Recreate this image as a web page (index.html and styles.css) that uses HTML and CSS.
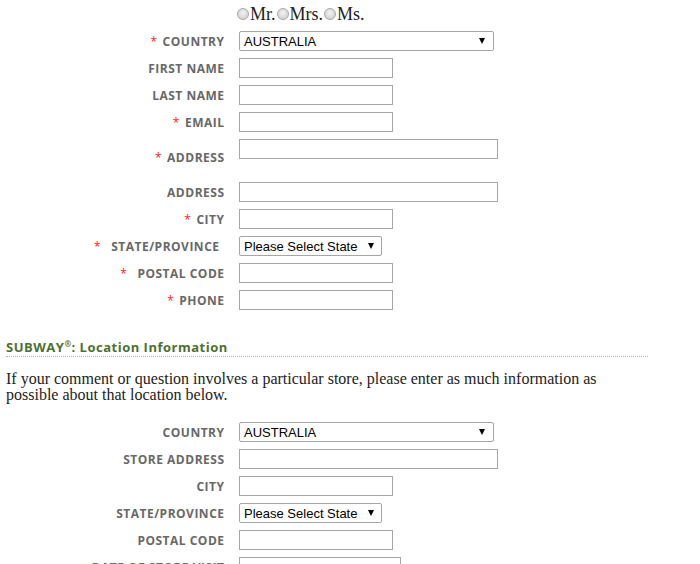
FILE: index.html
```html
<!DOCTYPE html>
<html>
<head>
<meta charset="utf-8">
<link rel="stylesheet" href="styles.css">
</head>
<body>
<form class="form">
  <div class="grid">
    <span class="lbl"></span>
    <div class="radios">
      <input type="radio" class="radio" name="t"><span>Mr.</span><input type="radio" class="radio" name="t"><span>Mrs.</span><input type="radio" class="radio" name="t"><span>Ms.</span>
    </div>

    <label class="lbl"><span class="req">*</span>COUNTRY</label>
    <div class="select w255"><span>AUSTRALIA</span><i class="arrow"></i></div>

    <label class="lbl">FIRST NAME</label>
    <input class="txt" type="text">

    <label class="lbl">LAST NAME</label>
    <input class="txt" type="text">

    <label class="lbl"><span class="req">*</span>EMAIL</label>
    <input class="txt" type="text">

    <label class="lbl"><span class="req">*</span>ADDRESS</label>
    <div class="tall"><input class="txt wide" type="text"></div>

    <label class="lbl">ADDRESS</label>
    <input class="txt wide" type="text">

    <label class="lbl"><span class="req">*</span>CITY</label>
    <input class="txt" type="text">

    <label class="lbl pad"><span class="req dbl">*</span>STATE/PROVINCE</label>
    <div class="select w143"><span>Please Select State</span><i class="arrow"></i></div>

    <label class="lbl"><span class="req dbl">*</span>POSTAL CODE</label>
    <input class="txt" type="text">

    <label class="lbl"><span class="req">*</span>PHONE</label>
    <input class="txt" type="text">
  </div>

  <section class="section">
    <h3 class="heading">SUBWAY<sup class="reg">®</sup>: Location Information</h3>
    <p class="intro">If your comment or question involves a particular store, please enter as much information as possible about that location below.</p>
  </section>

  <div class="grid grid2">
    <label class="lbl">COUNTRY</label>
    <div class="select w255"><span>AUSTRALIA</span><i class="arrow"></i></div>

    <label class="lbl">STORE ADDRESS</label>
    <input class="txt wide" type="text">

    <label class="lbl">CITY</label>
    <input class="txt" type="text">

    <label class="lbl">STATE/PROVINCE</label>
    <div class="select w143"><span>Please Select State</span><i class="arrow"></i></div>

    <label class="lbl">POSTAL CODE</label>
    <input class="txt" type="text">

    <label class="lbl">DATE OF STORE VISIT</label>
    <input class="txt w162" type="text">
  </div>
</form>
</body>
</html>
```

FILE: styles.css
```css
html, body {
  margin: 0;
  padding: 0;
  background: #fff;
}

body {
  font-family: "Liberation Serif", serif;
  overflow: hidden;
}

.grid {
  display: grid;
  grid-template-columns: 224px 1fr;
  column-gap: 15px;
  row-gap: 7px;
  align-items: center;
  justify-items: start;
}

.lbl {
  justify-self: end;
  font-family: "Open Sans", sans-serif;
  font-weight: 700;
  font-size: 12px;
  letter-spacing: 0.5px;
  line-height: 16px;
  padding-top: 2px;
  color: #686868;
  white-space: nowrap;
  margin-right: -0.5px;
}

.lbl.pad {
  padding-right: 5px;
}

.req {
  color: #ff1a1a;
  margin-right: 5px;
  font-weight: 400;
}

.req.dbl {
  margin-right: 10px;
}

.radios {
  box-sizing: border-box;
  height: 24px;
  padding-top: 4px;
  display: flex;
  align-items: center;
  margin-left: -3px;
  font-family: "Liberation Serif", serif;
  font-size: 18px;
  color: #222;
}

.radio {
  appearance: none;
  -webkit-appearance: none;
  width: 12px;
  height: 12px;
  margin: 0 1px 0 1px;
  border: 1px solid #a8a8a8;
  border-radius: 50%;
  background: radial-gradient(circle at 50% 40%, #f2f2f2 0%, #d6d6d6 70%, #c8c8c8 100%);
  box-sizing: border-box;
}

.txt {
  box-sizing: border-box;
  width: 154px;
  height: 20px;
  margin: 0;
  padding: 0 3px;
  border: 1px solid #a6a6a6;
  background: #fff;
}

.txt.wide {
  width: 259px;
}

.txt.w162 {
  width: 162px;
}

.tall {
  height: 36px;
}

.select {
  box-sizing: border-box;
  height: 20px;
  border: 1px solid #a6a6a6;
  border-radius: 2px;
  background: #fff;
  display: flex;
  align-items: center;
  justify-content: space-between;
  padding: 0 7px 0 4px;
  font-family: "Liberation Sans", sans-serif;
  font-size: 13px;
  color: #000;
}

.select.w255 {
  width: 255px;
  padding-right: 8px;
}

.select.w143 {
  width: 143px;
}

.arrow {
  width: 0;
  height: 0;
  border-left: 3px solid transparent;
  border-right: 3px solid transparent;
  border-top: 6px solid #000;
}

.section {
  margin: 29px 0 0 6px;
  width: 642px;
}

.heading {
  margin: 0;
  padding: 0;
  font-family: "Open Sans", sans-serif;
  font-weight: 700;
  font-size: 13px;
  letter-spacing: 0.5px;
  line-height: 17px;
  color: #4d7032;
  border-bottom: 1px dotted #b5b5b5;
}

.reg {
  font-size: 8px;
  line-height: 0;
  vertical-align: 5px;
}

.intro {
  margin: 14px 0 0 0;
  font-family: "Liberation Serif", serif;
  font-size: 16px;
  line-height: 16px;
  color: #222;
}

.grid2 {
  margin-top: 19px;
}
```
